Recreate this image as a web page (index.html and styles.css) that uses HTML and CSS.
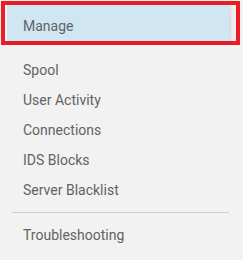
FILE: index.html
```html
<!DOCTYPE html>
<html lang="en">
<head>
    <meta charset="UTF-8">
    <meta name="viewport" content="width=device-width, initial-scale=1.0">
    <title>Manage Menu</title>
    <link rel="stylesheet" href="styles.css">
</head>
<body>
    <nav class="menu">
        <div class="highlight">
            <div class="menu-head">Manage</div>
        </div>

        <ul class="menu-list">
            <li>Spool</li>
            <li>User Activity</li>
            <li>Connections</li>
            <li>IDS Blocks</li>
            <li>Server Blacklist</li>
        </ul>
        <hr class="divider">
        <ul class="menu-list">
            <li>Troubleshooting</li>
        </ul>
    </nav>
</body>
</html>
```

FILE: styles.css
```css
body {
    margin: 0;
    background-color: #f2f2f2;
    font-family: Roboto, "Liberation Sans", Arial, sans-serif;
    font-size: 14px;
    color: #636363;
}
.menu {
    width: 243px;
    height: 260px;
}
.highlight {
    margin: 1px 3px 0 1px;
    border: 4px solid #ec1c24;
    padding: 0 7px 0 2px;
}
.menu-head {
    background-color: #d0e6f3;
    height: 36px;
    line-height: 42px;
    padding-left: 16px;
    box-shadow: 2px 1px 4px rgba(0,0,0,0.12);
}
.menu-list {
    list-style: none;
    margin: 0;
    padding: 0;
}
.menu-list li {
    height: 30px;
    line-height: 30px;
    padding-left: 23px;
}
.menu-list:first-of-type {
    margin-top: 10px;
}
.divider {
    border: none;
    border-top: 1px solid #cfcfcf;
    margin: 7px 14px 7px 12px;
}
```
